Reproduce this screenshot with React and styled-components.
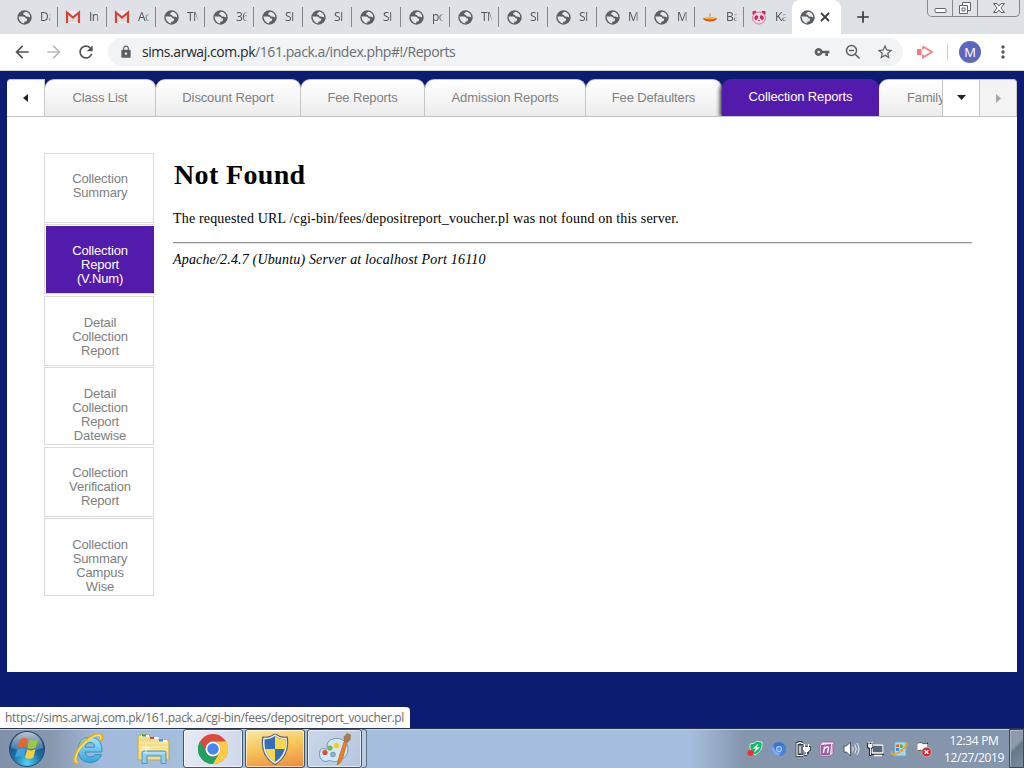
import React from 'react';
import styled, { createGlobalStyle, css } from 'styled-components';
import { MdArrowBack, MdArrowForward, MdRefresh, MdLock, MdVpnKey, MdStarBorder, MdMoreVert, MdAdd } from 'react-icons/md';

const Global = createGlobalStyle`
  * { box-sizing: border-box; }
  html, body { margin: 0; padding: 0; overflow: hidden; }
  svg { display: block; flex: none; }
`;

const ui = `'Open Sans', 'Noto Sans', sans-serif`;
const sans = `'Liberation Sans', Arial, sans-serif`;

const Screen = styled.div`
  position: relative;
  width: 1024px;
  height: 768px;
  display: flex;
  flex-direction: column;
  overflow: hidden;
  background: #0c1c72;
`;

/* Browser tab strip */
const TabStrip = styled.div`
  height: 34px;
  flex: none;
  display: flex;
  padding-left: 9px;
  background: #dee1e6;
  font: 12px/16px ${ui};
  color: #50545a;
`;
const BrowserTab = styled.div`
  width: 49px;
  height: 20px;
  margin-top: 7px;
  padding-left: 7px;
  display: flex;
  align-items: center;
  gap: 8px;
  border-right: 1px solid ${p => (p.$last ? 'transparent' : '#84878c')};
`;
const TabIcon = styled.div`
  width: 16px;
  display: flex;
  justify-content: center;
`;
const TabTitle = styled.span`
  width: 11px;
  overflow: hidden;
  white-space: nowrap;
  letter-spacing: -0.5px;
  mask-image: linear-gradient(90deg, #000 65%, transparent 110%);
`;
const ActiveTab = styled.div`
  width: 49px;
  height: 34px;
  margin-left: -1px;
  padding-left: 8px;
  display: flex;
  align-items: center;
  gap: 5px;
  background: #fff;
  border-radius: 8px 8px 0 0;
`;
const NewTab = styled.div`
  width: 44px;
  display: flex;
  align-items: center;
  justify-content: center;
  color: #35383c;
`;
const WindowButtons = styled.div`
  height: 17px;
  margin-left: 42px;
  display: grid;
  grid-template-columns: 24px 25px 42px;
  border: 1px solid #85898f;
  border-top: 0;
  border-radius: 0 0 5px 5px;
  background: #dfe2e7;
`;
const WindowButton = styled.div`
  display: flex;
  align-items: center;
  justify-content: center;
  & + & { border-left: 1px solid #85898f; }
`;

/* Address bar row */
const Toolbar = styled.div`
  height: 37px;
  flex: none;
  display: flex;
  align-items: center;
  padding-left: 12px;
  background: #fff;
  border-bottom: 1px solid #cfd2d8;
  color: #55585d;
`;
const NavIcon = styled.div`
  width: 32px;
  color: ${p => (p.$dim ? '#b9bbbe' : '#505357')};
`;
const Omnibox = styled.div`
  width: 795px;
  height: 28px;
  display: flex;
  align-items: center;
  padding: 0 9px 0 11px;
  border-radius: 14px;
  background: #f1f3f4;
  color: #5c5f64;
`;
const Url = styled.div`
  flex: 1;
  padding-left: 9px;
  font: 14px/20px ${ui};
  letter-spacing: -0.44px;
  white-space: nowrap;
  color: #6a6e73;
  b { font-weight: 400; color: #26282c; }
`;
const OmniIcons = styled.div`
  display: flex;
  align-items: center;
  gap: 15px;
`;
const Extension = styled.div`
  margin-left: 14px;
`;
const Separator = styled.div`
  width: 1px;
  height: 16px;
  margin: 0 11px 0 13px;
  background: #c9cbcf;
`;
const Avatar = styled.div`
  width: 22px;
  height: 22px;
  border-radius: 50%;
  background: #5c68c0;
  color: #fff;
  font: 13px/22px ${ui};
  text-align: center;
`;
const MenuDots = styled.div`
  margin-left: 12px;
`;

/* Page */
const Page = styled.div`
  width: 1010px;
  height: 593px;
  margin: 8px 0 0 7px;
  flex: none;
  display: flex;
  flex-direction: column;
  background: #fff;
`;
const ReportTabs = styled.div`
  height: 38px;
  flex: none;
  display: flex;
  background: #0c1c72;
  border-bottom: 1px solid #c3c3c3;
`;
const ScrollButton = styled.div`
  width: ${p => p.$w}px;
  display: flex;
  align-items: center;
  justify-content: center;
  background: ${p => (p.$dim ? '#f3f3f3' : '#fff')};
  border: 1px solid #c9c9c9;
  border-width: 1px 1px 0 0;
  border-radius: ${p => p.$radius || '0'};
`;
const ReportTab = styled.div`
  width: ${p => p.$w}px;
  padding: 0 0 1px;
  display: flex;
  align-items: center;
  justify-content: center;
  overflow: ${p => (p.$active ? 'visible' : 'hidden')};
  white-space: nowrap;
  font: 13px/16px ${sans};
  letter-spacing: -0.13px;
  color: #808080;
  background: linear-gradient(#fff, #ececec);
  border: 1px solid #c6c6c6;
  border-width: 1px 1px 0 0;
  border-radius: 9px 9px 0 0;
  ${p => p.$clipped && css`
    justify-content: flex-start;
    padding-left: 28px;
    border-radius: 9px 0 0 0;
  `}
  ${p => p.$active && css`
    padding: 0 0 3px 1px;
    color: #fff;
    background: #531bac;
    border-color: #531bac;
    box-shadow: -3px 2px 4px -1px #333;
    clip-path: inset(0 0 0 -8px);
  `}
`;
const Body = styled.div`
  display: flex;
  padding: 36px 0 0 37px;
`;
const SideMenu = styled.nav`
  width: 110px;
  margin-right: 19px;
`;
const SideItem = styled.div`
  height: ${p => p.$h}px;
  margin-bottom: ${p => p.$gap}px;
  padding: ${p => p.$top}px 19px 0 21px;
  border: 1px solid #dadada;
  background: #fff;
  color: #808080;
  font: 13px/14px ${sans};
  letter-spacing: -0.15px;
  text-align: center;
  ${p => p.$active && css`
    padding-right: 20px;
    color: #fff;
    background: #531bac;
    border-right: 0;
    box-shadow: inset 1px 1px #fff;
  `}
`;
const Article = styled.main`
  width: 799px;
  font: 14px/16px 'Liberation Serif', 'Times New Roman', serif;
  letter-spacing: 0.17px;
  color: #000;
`;
const Title = styled.h1`
  margin: 5px 0 20px;
  padding-left: 1px;
  font-size: 28px;
  line-height: 33px;
  letter-spacing: 0.35px;
`;
const Message = styled.p`
  margin: 0 0 15px;
`;
const Rule = styled.hr`
  margin: 0 0 8px;
  height: 2px;
  border: 0;
  border-top: 1px solid #959595;
  border-bottom: 1px solid #e2e2e2;
`;
const Address = styled.address`
  font-style: italic;
`;

const StatusBubble = styled.div`
  position: absolute;
  left: 0;
  top: 707px;
  width: 410px;
  height: 21px;
  padding-left: 5px;
  background: #fff;
  border-radius: 0 4px 0 0;
  font: 12px/21px ${ui};
  letter-spacing: -0.32px;
  white-space: nowrap;
  color: #6b6b6b;
`;

/* Taskbar */
const Taskbar = styled.div`
  height: 40px;
  margin-top: auto;
  flex: none;
  display: flex;
  align-items: stretch;
  border-top: 1px solid #26344f;
  box-shadow: inset 0 1px #c3cfdf;
  background: linear-gradient(90deg, #8090a8 0, #8797ae 50px, #a2badb 100px, #a6bedd 175px, #a6bedd 690px, #8495ac 745px, #8495ac 100%);
`;
const Launcher = styled.div`
  width: ${p => p.$w}px;
  display: flex;
  align-items: center;
  justify-content: center;
`;
const TaskButton = styled.div`
  width: ${p => p.$w || 60}px;
  margin: 0 2px 0 0;
  display: flex;
  align-items: center;
  justify-content: center;
  border: 1px solid #42536c;
  border-radius: 3px;
  box-shadow: inset 0 0 0 1px rgba(255, 255, 255, 0.6);
  background: ${p => p.$bg};
`;
const StackEdge = styled.div`
  width: 5px;
  margin-left: -2px;
  border: 1px solid #5b6d87;
  border-left: 0;
  border-radius: 0 3px 3px 0;
  background: #bccce1;
`;
const Tray = styled.div`
  margin-left: auto;
  display: flex;
  align-items: center;
  gap: 8px;
`;
const TrayIcon = styled.div`
  width: 16px;
  display: flex;
  justify-content: center;
`;
const Clock = styled.div`
  width: 62px;
  margin-left: 4px;
  font: 12px/17px ${ui};
  letter-spacing: -0.35px;
  text-align: center;
  color: #fff;
  white-space: nowrap;
`;
const ShowDesktop = styled.div`
  width: 15px;
  align-self: stretch;
  margin-left: -4px;
  border: 1px solid #3e4a5d;
  box-shadow: inset 1px 1px #a8b3c2;
  background: linear-gradient(135deg, #8e9bac 40%, #68778b 50%, #7d8b9e);
`;

const Globe = () => (
  <svg width="15" height="15" viewBox="0 0 15 15">
    <circle cx="7.500" cy="7.500" r="7.200" fill="#5b5e63" />
    <path d="M8 2q-2 .8-2 2 .5.9 2 .9 0 1.600 1.700 1.700 1.500 0 3.500.8Q13.200 3.800 10.200 2.200 9 1.600 8 2" fill="#e6e8ea" />
    <path d="M1.500 6.500h4.700q2.300.3 2.400 2h1.600q.2 2.500-1.500 2.900l-1.500.3v1.700Q2 12.600 1.500 6.500" fill="#e6e8ea" />
  </svg>
);
const Gmail = () => (
  <svg width="16" height="14" viewBox="0 0 16 14">
    <path d="M1 1h14v12H1z" fill="#eee" />
    <path d="M3 12V5l5 4 5-4v7" fill="#dcdcdc" />
    <path d="M2 13V2.500L8 7.500l6-5V13" fill="none" stroke="#d54335" strokeWidth="2.200" />
  </svg>
);
const Diya = () => (
  <svg width="16" height="12" viewBox="0 0 16 12">
    <path d="M8 1.500c1.500 2 1 3.500 0 4.500-1-1-1-2.500 0-4.500" fill="#e8a32a" />
    <path d="M.5 7.500Q8 6 15.500 7.500 13 10.500 8 10.500T.5 7.500" fill="#d84a12" />
    <path d="M1 7q7-2 14 0-7 3-14 0" fill="#f2b422" />
  </svg>
);
const Panda = () => (
  <svg width="16" height="15" viewBox="0 0 16 15">
    <circle cx="3.500" cy="3" r="2.200" fill="#d71c60" /><circle cx="12.500" cy="3" r="2.200" fill="#d71c60" />
    <ellipse cx="8" cy="8" rx="6.500" ry="6" fill="#f3dbe4" stroke="#e9779f" />
    <ellipse cx="5" cy="7.500" rx="1.700" ry="2.400" fill="#d71c60" transform="rotate(25 5 8)" />
    <ellipse cx="11" cy="7.500" rx="1.700" ry="2.400" fill="#d71c60" transform="rotate(-25 11 8)" />
    <path d="M6.800 10h2.400L8 11.500z" fill="#d71c60" />
  </svg>
);

const Orb = () => (
  <svg width="38" height="38" viewBox="0 0 38 38">
    <defs>
      <radialGradient id="orb" cx=".5" cy=".9" r=".9"><stop offset="0" stopColor="#50d5f3" /><stop offset=".45" stopColor="#1b6fa5" /><stop offset="1" stopColor="#173d6a" /></radialGradient>
      <linearGradient id="orbShine" x2="0" y2="1"><stop stopColor="#fff" stopOpacity=".7" /><stop offset="1" stopColor="#fff" stopOpacity=".12" /></linearGradient>
    </defs>
    <circle cx="19" cy="19" r="17.500" fill="url(#orb)" stroke="#294a6b" />
    <path d="M3 18a16 16 0 0 1 32 0q-16 6-32 0" fill="url(#orbShine)" />
    <path d="M12 9.500q4-2.500 8-.5l-2 8.500q-4-1.500-8.500.5z" fill="#ea6432" />
    <path d="M21.500 9.500q4 2 8.500-.3l-2.200 8.500q-4 2.200-8.500.2z" fill="#9dca3b" />
    <path d="M9.200 19.500q4.400-2 8.400-.4l-2 8q-4-1.800-8.500.3z" fill="#3fa3e0" />
    <path d="M19.200 19.500q4 1.900 8.300-.2l-2.200 8.500q-4 2-8.300 0z" fill="#fbce3a" />
  </svg>
);
const Explorer = () => (
  <svg width="32" height="32" viewBox="0 0 32 32">
    <defs><linearGradient id="ie" x2="0" y2="1"><stop stopColor="#a0e8fd" /><stop offset="1" stopColor="#35a5e2" /></linearGradient></defs>
    <path fillRule="evenodd" d="M29 19H12q.7 5 5.300 5 3.200 0 4.700-2.300h6.500Q25.500 29.500 17 29.500 5.500 29 5 17 5.500 4.500 17 4 30 5 29 19M12 14.200h9.800q-.5-4.700-4.800-4.700-4.200 0-5 4.700" fill="url(#ie)" stroke="#2482bd" strokeWidth=".8" />
    <path d="M28 8q2.500-5-.5-6.500C23-.5 10 7.500 5 17.500.5 26-.5 31 5.500 29.500" fill="none" stroke="#e9ad16" strokeWidth="2.800" />
    <path d="M27.500 6.500q1-3-.5-4C22 1 10 9.500 5 18.500 1.500 26 2 29 4.500 29" fill="none" stroke="#ffe25b" strokeWidth="1.500" />
  </svg>
);
const Folders = () => (
  <svg width="34" height="32" viewBox="0 0 34 32">
    <path d="M1 4q0-2 2-2h9l2 3h7l1 2h9q1 0 1 2v18H1z" fill="#f5dd85" stroke="#c8a54b" />
    <path d="M4 3h8M13 5h9M21 8h9" stroke="#fff" strokeWidth="2" />
    <path d="M5 2.500h4" stroke="#29a64a" strokeWidth="2" /><path d="M13 5h4" stroke="#d54a34" strokeWidth="2" /><path d="M22 7.500h4" stroke="#2d92cb" strokeWidth="2" />
    <path d="M2 10h29M2 14h29M2 17h29" stroke="#fff0b1" />
    <path d="M5 30.500V20q0-2 2-2h20q2 0 2 2v10.500h-5V23H10v7.500z" fill="#92cbea" stroke="#4b9ac5" />
    <path d="M6 20h22" stroke="#d3f2ff" /><path d="M9 10v10M4 15h10" stroke="#fff" strokeWidth=".8" />
  </svg>
);
const Chrome = ({ size = 30, mono }) => {
  const c = mono ? ['#3f72cf', '#7ba7ee', '#4a82dc', '#5b8ee6'] : ['#dc4a3d', '#1da260', '#fecd40', '#4688f1'];
  return (
    <svg width={size} height={size} viewBox="0 0 48 48">
      <circle cx="24" cy="24" r="24" fill={c[0]} />
      <path d="M3.200 12A24 24 0 0 0 24 48L34.400 30A12 12 0 0 1 13.600 30z" fill={c[1]} />
      <path d="M44.800 12A24 24 0 0 1 24 48L34.400 30A12 12 0 0 0 24 12z" fill={c[2]} />
      <circle cx="24" cy="24" r={mono ? 10 : 12} fill={mono ? '#c3d7fa' : '#fff'} /><circle cx="24" cy="24" r={mono ? 7 : 9.2} fill={c[3]} />
    </svg>
  );
};
const Shield = () => (
  <svg width="28" height="32" viewBox="0 0 28 32">
    <defs><clipPath id="sh"><path d="M14 2q5 4 11 3.500Q27 22 14 30 1 22 3 5.500 9 6 14 2" /></clipPath></defs>
    <g clipPath="url(#sh)"><path d="M0 0h14v16H0zM14 16h14v16H14z" fill="#326fc0" /><path d="M14 0h14v16H14zM0 16h14v16H0z" fill="#fbd848" /></g>
    <path d="M14 1.500q5 4 11.500 3.500Q28 22 14 30.500 0 22 2.500 5 9 5.500 14 1.500" fill="none" stroke="#59636d" strokeWidth="2.800" />
    <path d="M14 2q5 4 11 3.500Q27 22 14 30 1 22 3 5.500 9 6 14 2" fill="none" stroke="#e9edf0" strokeWidth="1.500" />
  </svg>
);
const Paint = () => (
  <svg width="34" height="34" viewBox="0 0 34 34">
    <path d="M11 9C19 3 30 8 30 17q0 8-8 11c-8 4-8-1-12 1C4 31 0 25 2 19q0-3 5-2c5 1 0-4 4-8" fill="#d3e7f5" stroke="#6d9cbe" />
    <circle cx="7" cy="20.500" r="2.600" fill="#dc4b42" /><circle cx="12" cy="16" r="2.600" fill="#6dbb48" /><circle cx="18.500" cy="13.500" r="2.700" fill="#f1cd37" /><circle cx="15" cy="22.500" r="2.300" fill="#8fb6d2" stroke="#6794b4" />
    <path d="M19 33l3-11 4-12 3 1-4 14q-2 7-6 8" fill="#eb812a" stroke="#ba6423" strokeWidth=".7" />
    <path d="M26 10l-.5-5L29 1l4 1.500-.5 5.500-3.500 3z" fill="#a87c52" />
  </svg>
);

const TrayShield = () => (
  <svg width="16" height="17" viewBox="0 0 16 17">
    <path d="M3 4q5 0 7-3 2 1 5 1 1 9-7 13-6-4-5-11" fill="#10ba68" stroke="#e7f9ef" strokeWidth=".8" />
    <path d="M11 4L6 8.500h3L7.500 12l5-4.500H9.500z" fill="#fff" stroke="#fff" strokeWidth=".4" /><circle cx="3.500" cy="13" r="3" fill="#f02e32" />
  </svg>
);
const Power = () => (
  <svg width="16" height="16" viewBox="0 0 16 16">
    <path d="M8 2.500H6v-1H4v1H2v12h6" fill="#667385" stroke="#252b34" strokeWidth="2.600" />
    <path d="M8 2.500H6v-1H4v1H2v12h6M5 5v7" fill="none" stroke="#fff" strokeWidth="1.200" />
    <path d="M8 6h7v3l-2 2v1.500h-1.500V14H9" fill="none" stroke="#252b34" strokeWidth="1.500" />
    <path d="M8 6h7v2.500L13 11h-3L8 8.500z" fill="#fff" />
    <path d="M9.500 6V3M13.500 6V3M11.500 10v3.500H9.500" fill="none" stroke="#fff" strokeWidth="1.200" />
  </svg>
);
const OneNote = () => (
  <svg width="16" height="16" viewBox="0 0 16 16">
    <path d="M3 1h12l-1 12-3 2H1V4z" fill="#f1e6f2" stroke="#8c4d8b" strokeWidth=".7" />
    <path d="M2 4l10-1-1 11H2z" fill="#a05c9e" /><path d="M4.500 12l1-6.500M5.200 8q4-4 4.300-1L8.500 12" fill="none" stroke="#fff" strokeWidth="1.400" />
    <path d="M13.500 3l-.5 9" stroke="#b885b6" />
  </svg>
);
const Speaker = () => (
  <svg width="17" height="16" viewBox="0 0 17 16">
    <path d="M1 5h2.500l4-4v14l-4-4H1z" fill="#fff" stroke="#353d49" strokeWidth=".8" />
    <path d="M9.500 5.500q1.500 2.500 0 5M11.800 3.500q3 4.500 0 9M14 2q4 6 0 12" fill="none" stroke="#e8edf3" />
  </svg>
);
const Network = () => (
  <svg width="17" height="16" viewBox="0 0 17 16">
    <path d="M5 4h11v9H5z" fill="#586679" stroke="#252b34" strokeWidth="2" /><path d="M5 4h11v8H5zM7 14.500h8" fill="#57677c" stroke="#fff" strokeWidth="1.300" />
    <path d="M0 2h6v5L4.500 8v7H2V8L0 7z" fill="#252b34" /><path d="M1 3h4.500v3L4 7v7H3V7L1 6z" fill="#fff" /><path d="M2 3V.5M5 3V.5" stroke="#fff" />
  </svg>
);
const Update = () => (
  <svg width="17" height="16" viewBox="0 0 17 16">
    <path d="M4 1h11v14H3z" fill="#a5daf6" stroke="#6eaccd" />
    <path d="M5 4l3-1v3H5z" fill="#e66132" /><path d="M9 3l3 1v3H9z" fill="#62b14b" /><path d="M5 7h3v3H5z" fill="#398ed4" /><path d="M9 8h3v3H9z" fill="#f3bb29" />
    <path d="M14 2q3 0 1 3-4 6-11 8-5 1-3-3" fill="none" stroke="#f3a12d" strokeWidth="1.900" />
  </svg>
);
const Flag = () => (
  <svg width="17" height="16" viewBox="0 0 17 16">
    <path d="M2 1v14M3 3q2.500-1 4.500 0T12 3v6q-2.500 1-4.500 0T3 9z" fill="#fff" stroke="#252b34" strokeWidth="2" />
    <path d="M2 1v14M3 3q2.500-1 4.500 0T12 3v6q-2.500 1-4.500 0T3 9z" fill="#fff" stroke="#fff" />
    <circle cx="11.500" cy="11" r="4.700" fill="#d7262b" stroke="#f3bdbd" strokeWidth=".6" /><path d="M9.700 9.200l3.600 3.600m0-3.600l-3.600 3.600" stroke="#fff" strokeWidth="1.500" />
  </svg>
);

const browserTabs = [
  ['g', 'Da'], ['m', 'In'], ['m', 'Ac'], ['g', 'TM'], ['g', '36'], ['g', 'SI'], ['g', 'SI'], ['g', 'SI'],
  ['g', 'po'], ['g', 'TM'], ['g', 'SI'], ['g', 'SI'], ['g', 'M'], ['g', 'M'], ['d', 'Ba'], ['p', 'Ka'],
];
const tabIcons = { g: Globe, m: Gmail, d: Diya, p: Panda };
const trayIcons = [TrayShield, () => <Chrome size={14} mono />, Power, OneNote, Speaker, Network, Update, Flag];

const reportTabs = [
  ['Class List', 111], ['Discount Report', 145], ['Fee Reports', 124], ['Admission Reports', 161], ['Fee Defaulters', 136],
];
const sideItems = [
  { lines: ['Collection', 'Summary'], h: 70, gap: 1, top: 18 },
  { lines: ['Collection', 'Report', '(V.Num)'], h: 70, gap: 2, top: 19, active: true },
  { lines: ['Detail', 'Collection', 'Report'], h: 70, gap: 1, top: 19 },
  { lines: ['Detail', 'Collection', 'Report', 'Datewise'], h: 78, gap: 2, top: 19 },
  { lines: ['Collection', 'Verification', 'Report'], h: 70, gap: 1, top: 18 },
  { lines: ['Collection', 'Summary', 'Campus', 'Wise'], h: 78, gap: 0, top: 19 },
];

export default function App() {
  return (
    <Screen>
      <Global />
      <TabStrip>
        {browserTabs.map(([icon, title], i) => {
          const Icon = tabIcons[icon];
          return (
            <BrowserTab key={i} $last={i === 15}>
              <TabIcon><Icon /></TabIcon>
              <TabTitle>{title}</TabTitle>
            </BrowserTab>
          );
        })}
        <ActiveTab>
          <Globe />
          <svg width="10" height="10"><path d="M1 1l8 8m0-8L1 9" stroke="#3c4043" strokeWidth="1.800" /></svg>
        </ActiveTab>
        <NewTab><MdAdd size={20} /></NewTab>
        <WindowButtons>
          <WindowButton>
            <svg width="13" height="14"><rect x="1" y="7.500" width="11" height="4" rx="1" fill="#fff" stroke="#60656c" /></svg>
          </WindowButton>
          <WindowButton>
            <svg width="14" height="14"><path d="M4.500 1.500h8v8h-8z" fill="#fff" stroke="#60656c" /><path d="M1.500 4.500h8v8h-8z" fill="#fff" stroke="#60656c" /><path d="M4 7h3v3H4z" fill="none" stroke="#60656c" /></svg>
          </WindowButton>
          <WindowButton>
            <svg width="14" height="14"><path d="M1.500 2.500h3.500l2 2.500 2-2.500h3.500L9 7l3.500 4.500H9L7 9l-2 2.500H1.500L5 7z" fill="#fff" stroke="#60656c" /></svg>
          </WindowButton>
        </WindowButtons>
      </TabStrip>

      <Toolbar>
        <NavIcon><MdArrowBack size={20} /></NavIcon>
        <NavIcon $dim><MdArrowForward size={20} /></NavIcon>
        <NavIcon><MdRefresh size={20} /></NavIcon>
        <Omnibox>
          <MdLock size={14} />
          <Url><b>sims.arwaj.com.pk</b>/161.pack.a/index.php#!/Reports</Url>
          <OmniIcons>
            <MdVpnKey size={16} />
            <svg width="16" height="16" viewBox="0 0 16 16" fill="none" stroke="#5c5f64" strokeWidth="1.500">
              <circle cx="6.500" cy="6.500" r="5" /><path d="M10 10l4.500 4.500M4 6.500h5" />
            </svg>
            <MdStarBorder size={18} />
          </OmniIcons>
        </Omnibox>
        <Extension>
          <svg width="17" height="14" viewBox="0 0 17 14">
            <path d="M0 4h4.500v6H0z" fill="#fb7777" />
            <path d="M6 1.500L15 7l-9 5.500V9.500M6 1.500v3" fill="none" stroke="#fb8080" strokeWidth="1.800" />
          </svg>
        </Extension>
        <Separator />
        <Avatar>M</Avatar>
        <MenuDots><MdMoreVert size={20} /></MenuDots>
      </Toolbar>

      <Page>
        <ReportTabs>
          <ScrollButton $w={38} $radius="4px 0 0 0"><svg width="5" height="8"><path d="M5 0v8L0 4z" fill="#222" /></svg></ScrollButton>
          {reportTabs.map(([label, w]) => <ReportTab key={label} $w={w}>{label}</ReportTab>)}
          <ReportTab $w={157} $active>Collection Reports</ReportTab>
          <ReportTab $w={64} $clipped>Family</ReportTab>
          <ScrollButton $w={37}><svg width="9" height="6"><path d="M0 0h9L4.500 5z" fill="#222" /></svg></ScrollButton>
          <ScrollButton $w={37} $dim $radius="0 4px 0 0"><svg width="5" height="9"><path d="M0 0v9l5-4.500z" fill="#a6a6a6" /></svg></ScrollButton>
        </ReportTabs>
        <Body>
          <SideMenu>
            {sideItems.map((item, i) => (
              <SideItem key={i} $h={item.h} $gap={item.gap} $top={item.top} $active={item.active}>
                {item.lines.map(line => <div key={line}>{line}</div>)}
              </SideItem>
            ))}
          </SideMenu>
          <Article>
            <Title>Not Found</Title>
            <Message>The requested URL /cgi-bin/fees/depositreport_voucher.pl was not found on this server.</Message>
            <Rule />
            <Address>Apache/2.4.7 (Ubuntu) Server at localhost Port 16110</Address>
          </Article>
        </Body>
      </Page>

      <StatusBubble>https://sims.arwaj.com.pk/161.pack.a/cgi-bin/fees/depositreport_voucher.pl</StatusBubble>

      <Taskbar>
        <Launcher $w={54}><Orb /></Launcher>
        <Launcher $w={70}><Explorer /></Launcher>
        <Launcher $w={59}><Folders /></Launcher>
        <TaskButton $bg="linear-gradient(100deg, #e6ebf3, #cdd8e8)"><Chrome /></TaskButton>
        <TaskButton $bg="linear-gradient(170deg, #fbe59a 5%, #f6c65a 45%, #ed8a3e)"><Shield /></TaskButton>
        <TaskButton $w={55} $bg="linear-gradient(130deg, #cbd7e8, #b3c6df)"><Paint /></TaskButton>
        <StackEdge />
        <Tray>
          {trayIcons.map((Icon, i) => <TrayIcon key={i}><Icon /></TrayIcon>)}
          <Clock>12:34 PM<br />12/27/2019</Clock>
          <ShowDesktop />
        </Tray>
      </Taskbar>
    </Screen>
  );
}
